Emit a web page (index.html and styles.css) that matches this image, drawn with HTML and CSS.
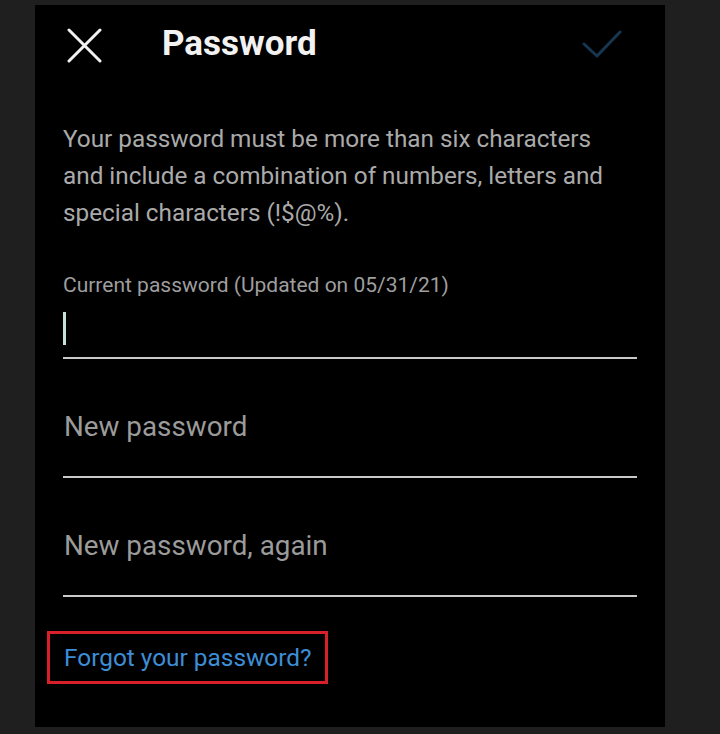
FILE: index.html
```html
<!DOCTYPE html>
<html lang="en">
<head>
    <meta charset="UTF-8">
    <title>Password</title>
    <link rel="stylesheet" href="styles.css">
</head>
<body>
<div class="panel">
    <!-- top bar: close, title, confirm -->
    <div class="topbar">
        <svg class="close-icon" width="35" height="35" viewBox="0 0 35 35">
            <path d="M2 2 L33 33 M33 2 L2 33" stroke="#f2f2f2" stroke-width="3" stroke-linecap="round"/>
        </svg>
        <h1 class="title">Password</h1>
        <svg class="done-icon" width="40" height="28" viewBox="0 0 40 28">
            <path d="M2 14 L15 26 L38 2" fill="none" stroke="#173650" stroke-width="3" stroke-linecap="round" stroke-linejoin="round"/>
        </svg>
    </div>

    <p class="hint">Your password must be more than six characters and include a combination of numbers, letters and special characters (!$@%).</p>

    <div class="label">Current password (Updated on 05/31/21)</div>
    <div class="field field-current"><span class="cursor"></span></div>

    <div class="field"><span class="placeholder">New password</span></div>
    <div class="field"><span class="placeholder">New password, again</span></div>

    <a class="forgot" href="#">Forgot your password?</a>
</div>
</body>
</html>
```
FILE: styles.css
```css
body { margin: 0; background: #1f1f1f; font-family: Roboto, "Liberation Sans", sans-serif; }
.panel { margin: 5px 0 0 35px; width: 630px; height: 722px; background: #000; padding: 0 28px; box-sizing: border-box; }
.topbar { height: 80px; display: flex; align-items: center; padding-left: 4px; padding-top: 1px; box-sizing: border-box; }
.close-icon { flex: none; }
.title { margin: -4px 0 0 60px; font-size: 35px; font-weight: 700; color: #f2f2f2; flex: 1; }
.done-icon { flex: none; margin-right: 15px; margin-top: -4px; }
.hint { margin: 35px 0 0; font-size: 24.3px; line-height: 37px; color: #aaaaaa; padding-right: 10px; }
.label { margin-top: 42px; font-size: 21px; line-height: 24px; color: #9e9e9e; }
.field { border-bottom: 2px solid #c9c9c9; padding: 50px 0 31px 1px; }
.field-current { padding: 15px 0 12px; }
.cursor { display: block; width: 3px; height: 33px; background: #c4e2d9; }
.placeholder { display: block; font-size: 27.8px; line-height: 36px; color: #9b9b9b; }
.forgot { display: inline-block; margin: 34px 0 0 -16px; padding: 10px 13px 10px 14px; border: 3px solid #d7202a; font-size: 24.4px; line-height: 27px; color: #3d8ed6; text-decoration: none; }
```
